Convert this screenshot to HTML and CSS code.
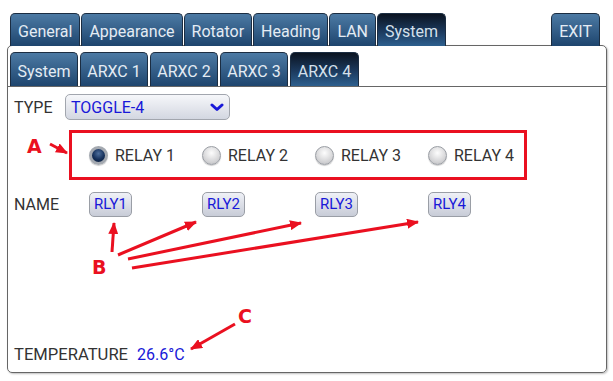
FILE: index.html
```html
<!DOCTYPE html>
<html lang="en">
<head>
    <meta charset="UTF-8">
    <meta name="viewport" content="width=device-width, initial-scale=1.0">
    <title>ARXC 4</title>
    <link rel="stylesheet" href="styles.css">
</head>
<body>
    <div class="app">
        <nav class="tabs main-tabs">
            <span class="tab">General</span>
            <span class="tab">Appearance</span>
            <span class="tab">Rotator</span>
            <span class="tab">Heading</span>
            <span class="tab">LAN</span>
            <span class="tab active">System</span>
            <span class="tab exit">EXIT</span>
        </nav>

        <section class="panel">
            <nav class="tabs sub-tabs">
                <span class="tab">System</span>
                <span class="tab">ARXC 1</span>
                <span class="tab">ARXC 2</span>
                <span class="tab">ARXC 3</span>
                <span class="tab active">ARXC 4</span>
            </nav>

            <div class="page">
                <div class="row type-row">
                    <span class="label">TYPE</span>
                    <div class="select">
                        <span>TOGGLE-4</span>
                        <svg class="chevron" width="14" height="9" viewBox="0 0 14 9">
                            <path d="M2 2 L7 6.5 L12 2" fill="none" stroke="#1818d8" stroke-width="3" stroke-linecap="round" stroke-linejoin="round"/>
                        </svg>
                    </div>
                </div>

                <div class="relay-box">
                    <label class="radio"><span class="dot checked"></span>RELAY 1</label>
                    <label class="radio"><span class="dot"></span>RELAY 2</label>
                    <label class="radio"><span class="dot"></span>RELAY 3</label>
                    <label class="radio"><span class="dot"></span>RELAY 4</label>
                </div>

                <div class="row name-row">
                    <span class="label">NAME</span>
                    <div class="names">
                        <span class="name-btn">RLY1</span>
                        <span class="name-btn">RLY2</span>
                        <span class="name-btn">RLY3</span>
                        <span class="name-btn">RLY4</span>
                    </div>
                </div>

                <div class="temp-row"><span class="temp-label">TEMPERATURE</span><span class="value">26.6°C</span></div>
            </div>
        </section>

        <!-- annotations -->
        <svg class="notes" width="613" height="381" viewBox="0 0 613 381">
            <defs>
                <marker id="head" markerUnits="userSpaceOnUse" markerWidth="12" markerHeight="10" refX="11" refY="5" orient="auto">
                    <path d="M0 0 L12 5 L0 10 Z" fill="#ea1020"/>
                </marker>
            </defs>
            <g stroke="#ea1020" stroke-width="3" marker-end="url(#head)">
                <line x1="50" y1="144" x2="67" y2="153"/>
                <line x1="112" y1="252" x2="114" y2="223"/>
                <line x1="118" y1="255" x2="196" y2="222"/>
                <line x1="128" y1="259" x2="301" y2="223"/>
                <line x1="132" y1="268" x2="418" y2="222"/>
                <line x1="235" y1="324" x2="191" y2="349"/>
            </g>
            <g class="letters">
                <text x="27" y="153">A</text>
                <text x="92" y="274">B</text>
                <text x="238" y="323">C</text>
            </g>
        </svg>
    </div>
</body>
</html>
```

FILE: styles.css
```css
body {
    margin: 0;
    background-color: #fff;
    font-family: Roboto, "Liberation Sans", sans-serif;
    font-size: 16px;
    color: #333;
}
.app {
    position: relative;
    width: 613px;
    height: 381px;
    box-sizing: border-box;
    padding: 13px 6px 0 7px;
}
.tabs {
    display: flex;
    gap: 1px;
}
.tab {
    box-sizing: border-box;
    padding: 3px 7px 0;
    border: 1px solid #1b2d42;
    border-bottom: none;
    border-radius: 5px 5px 0 0;
    background: linear-gradient(#4c7aa4, #1e456e);
    color: #e4ecf4;
    text-align: center;
}
.tab.active {
    background: linear-gradient(#0b1421, #1c3a5e 55%, #2d5f8e);
    color: #d4e0ec;
}
.main-tabs {
    margin-left: 3px;
    height: 33px;
    position: relative;
    z-index: 1;
}
.main-tabs .tab {
    height: 33px;
    line-height: 30px;
}
.main-tabs .exit {
    margin-left: auto;
    margin-right: 7px;
}
.panel {
    display: flex;
    flex-direction: column;
    height: 328px;
    box-sizing: border-box;
    margin-top: -1px;
    border: 1px solid #666;
    border-radius: 5px;
    box-shadow: 1px 1px 2px rgba(0, 0, 0, 0.25);
}
.sub-tabs {
    margin: 6px 0 0 2px;
    gap: 2px;
}
.sub-tabs .tab {
    width: 68px;
    height: 34px;
    padding: 3px 0 0;
    line-height: 31px;
}
.sub-tabs .tab.active {
    width: 69px;
}
.page {
    flex: 1;
    display: flex;
    flex-direction: column;
    border-top: 1px solid #666;
    padding: 7px 6px 7px 6px;
}
.row {
    display: flex;
    align-items: center;
}
.type-row .label {
    width: 51px;
}
.select {
    display: flex;
    align-items: center;
    justify-content: space-between;
    width: 165px;
    height: 26px;
    box-sizing: border-box;
    padding: 0 5px 0 5px;
    border: 1px solid #a2a6ae;
    border-radius: 5px;
    background: linear-gradient(#f6f7fa, #d3d7e1);
    color: #1818d8;
}
.relay-box {
    display: grid;
    grid-template-columns: 113px 113px 113px 1fr;
    align-items: center;
    width: 458px;
    height: 50px;
    box-sizing: border-box;
    margin: 10px 0 0 55px;
    padding-left: 17px;
    border: 3px solid #ea1020;
}
.radio {
    display: flex;
    align-items: center;
    gap: 7px;
}
.dot {
    width: 19px;
    height: 19px;
    box-sizing: border-box;
    border-radius: 50%;
    border: 1px solid #9a9ea4;
    background: radial-gradient(circle at 50% 35%, #fdfdfd, #d6d6d8 60%, #b8b8bc);
    box-shadow: 0 1px 1px rgba(0, 0, 0, 0.2);
}
.dot.checked {
    border: 3px solid #a4a9b0;
    background: radial-gradient(circle at 50% 35%, #4d6e9c, #15305a 55%, #0b1b33);
}
.name-row {
    margin-top: 12px;
}
.name-row .label {
    width: 75px;
}
.names {
    display: grid;
    grid-template-columns: repeat(4, 113px);
}
.name-btn {
    width: 43px;
    height: 25px;
    box-sizing: border-box;
    border: 1px solid #9a9ea6;
    border-radius: 5px;
    background: linear-gradient(#eff1f7, #c8ccd7);
    color: #1818d8;
    font-size: 15px;
    line-height: 23px;
    text-align: center;
}
.temp-row {
    display: flex;
    align-items: baseline;
    margin-top: auto;
    line-height: 20px;
}
.temp-row .temp-label {
    width: 123px;
    font-size: 16.6px;
}
.temp-row .value {
    color: #1818d8;
}
.notes {
    position: absolute;
    top: 0;
    left: 0;
    pointer-events: none;
}
.letters text {
    fill: #ea1020;
    font-family: "DejaVu Sans", sans-serif;
    font-weight: bold;
    font-size: 19px;
}
```
